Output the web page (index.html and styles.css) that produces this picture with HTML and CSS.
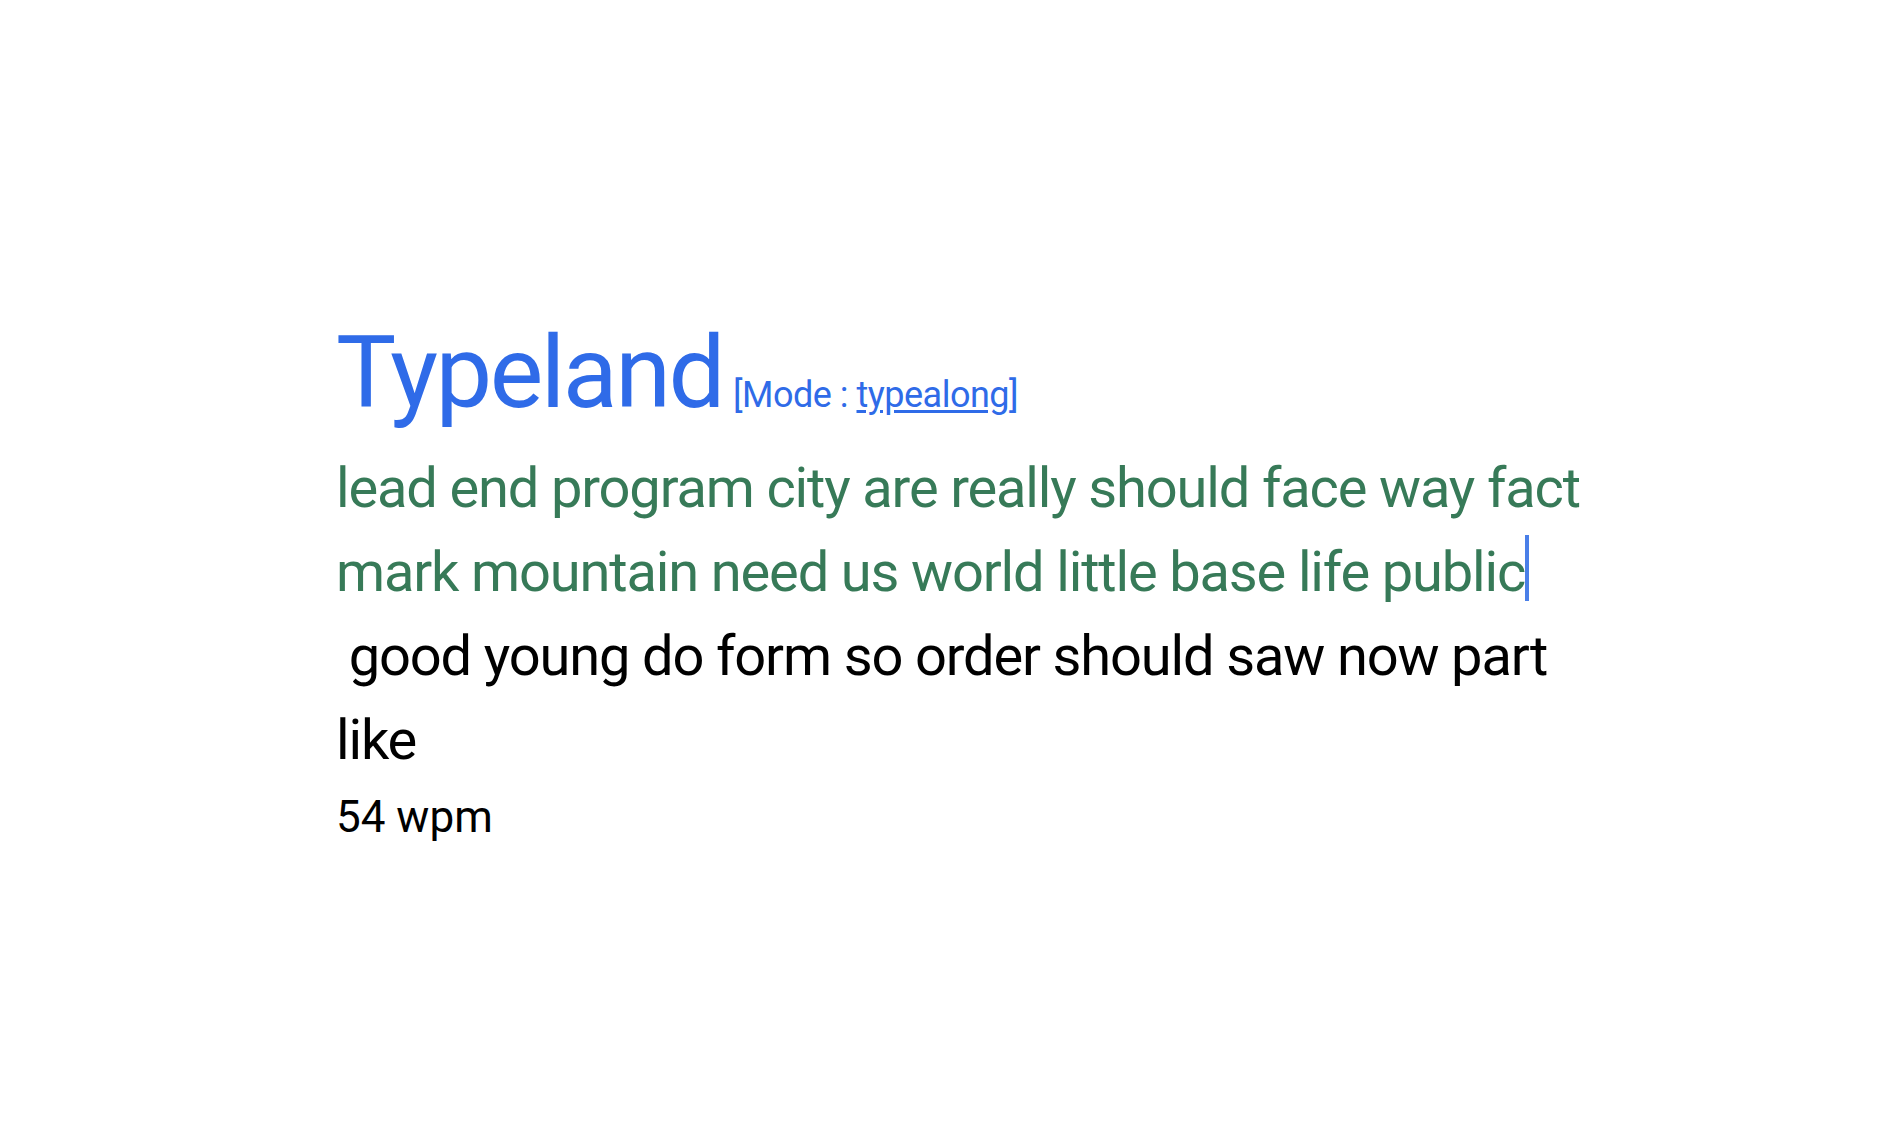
FILE: index.html
```html
<!DOCTYPE html>
<html lang="en">
<head>
<meta charset="utf-8">
<title>Typeland</title>
<link rel="stylesheet" href="styles.css">
</head>
<body>
<main class="page">
  <section class="wrap">
    <header class="head">
      <h1 class="title">Typeland</h1>
      <span class="mode">[Mode : <a href="#" class="mode-link">typealong</a>]</span>
    </header>
    <p class="text"><span class="done">lead end program city are really should face way fact mark mountain need us world little base life public</span><span class="caret"></span><span class="todo"><span class="next"> good</span> young do form so order should saw now part like</span></p>
    <div class="wpm">54 wpm</div>
  </section>
</main>
</body>
</html>
```
FILE: styles.css
```css
html, body {
  margin: 0;
  padding: 0;
  background: #ffffff;
}
body {
  font-family: Roboto, "Liberation Sans", Arial, sans-serif;
  color: #000;
}
.page {
  min-height: 1146px;
  display: flex;
  flex-direction: column;
  justify-content: center;
  padding: 16px 0 0 336px;
  box-sizing: border-box;
}
.wrap {
  width: 1280px;
}
.head {
  display: flex;
  align-items: baseline;
  gap: 10px;
  margin-bottom: 12px;
}
.title {
  margin: 0;
  font-size: 101px;
  font-weight: 400;
  line-height: 1.2;
  letter-spacing: -2.5px;
  color: #2f6be8;
}
.mode {
  font-size: 36px;
  letter-spacing: -0.5px;
  color: #2f6be8;
}
.mode-link {
  color: #2f6be8;
  text-decoration: underline;
  text-underline-offset: 3px;
}
.text {
  margin: 0;
  font-size: 56px;
  line-height: 84px;
  letter-spacing: -1.15px;
}
.done {
  color: #377a58;
}
.todo {
  color: #000;
}
.next {
  white-space: pre;
}
.caret {
  display: inline-block;
  width: 4px;
  height: 66px;
  background: #4a7fe8;
  vertical-align: -10px;
}
.wpm {
  font-size: 44px;
  line-height: 66px;
  margin-top: 2px;
}
```
